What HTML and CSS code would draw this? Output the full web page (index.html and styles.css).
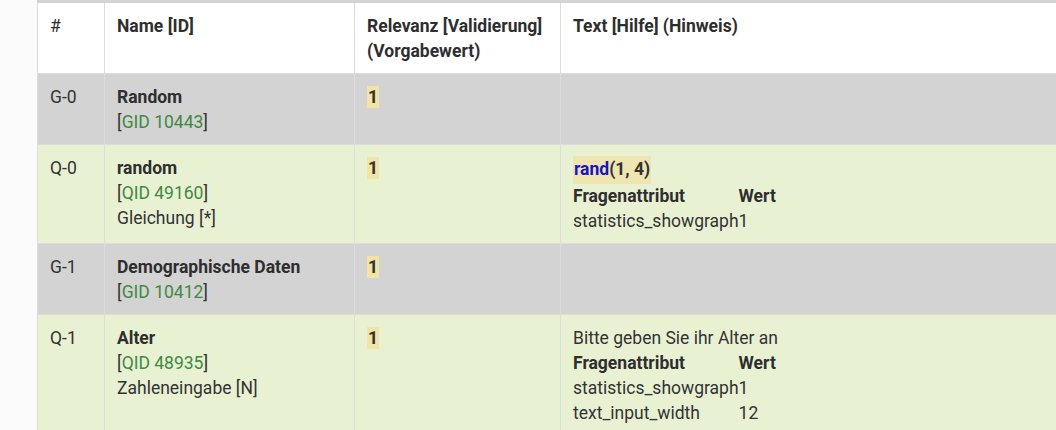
FILE: index.html
```html
<!DOCTYPE html>
<html lang="de">
<head>
<meta charset="utf-8">
<title>Fragebogen Übersicht</title>
<link rel="stylesheet" href="styles.css">
</head>
<body>
<div class="wrap">
<table class="survey">
  <colgroup>
    <col class="c-num">
    <col class="c-name">
    <col class="c-rel">
    <col class="c-text">
  </colgroup>
  <thead>
    <tr>
      <th>#</th>
      <th>Name [ID]</th>
      <th>Relevanz [Validierung] (Vorgabewert)</th>
      <th>Text [Hilfe] (Hinweis)</th>
    </tr>
  </thead>
  <tbody>
    <tr class="group">
      <td>G-0</td>
      <td><b>Random</b><br>[<span class="id">GID 10443</span>]</td>
      <td><span class="rel">1</span></td>
      <td></td>
    </tr>
    <tr class="question">
      <td>Q-0</td>
      <td><b>random</b><br>[<span class="id">QID 49160</span>]<br>Gleichung [*]</td>
      <td><span class="rel">1</span></td>
      <td>
        <span class="expr"><span class="fn">rand</span>(1, 4)</span>
        <table class="attrs">
          <tr><th>Fragenattribut</th><th>Wert</th></tr>
          <tr><td>statistics_showgraph</td><td>1</td></tr>
        </table>
      </td>
    </tr>
    <tr class="group">
      <td>G-1</td>
      <td><b>Demographische Daten</b><br>[<span class="id">GID 10412</span>]</td>
      <td><span class="rel">1</span></td>
      <td></td>
    </tr>
    <tr class="question">
      <td>Q-1</td>
      <td><b>Alter</b><br>[<span class="id">QID 48935</span>]<br>Zahleneingabe [N]</td>
      <td><span class="rel">1</span></td>
      <td>
        Bitte geben Sie ihr Alter an
        <table class="attrs">
          <tr><th>Fragenattribut</th><th>Wert</th></tr>
          <tr><td>statistics_showgraph</td><td>1</td></tr>
          <tr><td>text_input_width</td><td>12</td></tr>
        </table>
      </td>
    </tr>
  </tbody>
</table>
</div>
</body>
</html>
```

FILE: styles.css
```css
html, body {
  margin: 0;
  padding: 0;
  background: #fbfbfb;
  overflow: hidden;
}

body {
  font-family: Roboto, "Liberation Sans", sans-serif;
  font-size: 17.5px;
  line-height: 25px;
  color: #333;
}

.wrap {
  padding-left: 37px;
}

.survey {
  width: 100%;
  table-layout: fixed;
  border-collapse: collapse;
  border-top: 3px solid #d3d3d3;
  border-left: 1px solid #dddddd;
}

.c-num { width: 67px; }
.c-name { width: 250px; }
.c-rel { width: 206px; }

.survey > thead > tr > th,
.survey > tbody > tr > td {
  padding: 11px 12px 9px;
  vertical-align: top;
  text-align: left;
  border-right: 1px solid #dddddd;
  border-bottom: 1px solid #dddddd;
}

.survey > thead > tr > th:last-child,
.survey > tbody > tr > td:last-child {
  border-right: none;
}

.survey > thead > tr > th {
  background: #ffffff;
  font-weight: 700;
  color: #2e2e2e;
}

.survey > thead > tr > th:first-child {
  font-weight: 400;
}

.group > td {
  background: #d3d3d3;
}

.question > td {
  background: #e9f1d3;
}

b {
  font-weight: 700;
  color: #2e2e2e;
}

.id {
  color: #3f8a3f;
}

.rel {
  background: #f1e5a5;
  font-weight: 700;
  padding: 1px 1px;
}

.expr {
  display: inline-block;
  background: #efe5b0;
  padding: 1px 1px 2px;
  font-weight: 700;
  color: #333;
}

.fn {
  color: #1515c8;
}

.attrs {
  border-collapse: collapse;
}

.attrs th,
.attrs td {
  padding: 0;
  text-align: left;
  vertical-align: top;
}

.attrs th {
  font-weight: 700;
  color: #2e2e2e;
}
```
